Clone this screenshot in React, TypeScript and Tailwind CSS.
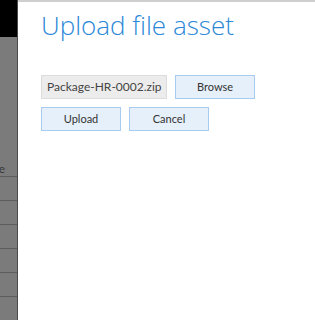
const rows = [0, 1, 2, 3, 4, 5];

export default function App() {
  return (
    <div className="flex h-[320px] w-[315px] overflow-hidden bg-white" style={{ fontFamily: 'Lato, "Liberation Sans", sans-serif' }}>
      <div className="flex w-[18px] shrink-0 flex-col bg-[#7b7b7b] border-r border-[#4a4a4a]">
        <div className="h-[38px] bg-black" />
        <div className="relative h-[143px]">
          <span className="absolute right-[12px] top-[126px] text-[12px] leading-none text-[#3a3a3a]">e</span>
        </div>
        {rows.map((r) => (
          <div key={r} className="h-[24px] shrink-0 border-t border-[#5c5c5c]" />
        ))}
      </div>
      <div className="flex flex-1 flex-col border-t-[2px] border-[#cfcfcf] pl-[23px] pt-[7px]">
        <h1 className="font-['Open_Sans'] text-[26px] font-light leading-[32px] text-[#2b88d8]">Upload file asset</h1>
        <div className="mt-[34px] flex gap-[8px]">
          <div className="flex h-[24px] w-[126px] shrink-0 items-center overflow-hidden whitespace-nowrap border border-[#dcdcdc] bg-[#ececec] pl-[5px] text-[12px] text-[#444]">
            Package-HR-0002.zip
          </div>
          <button className="h-[24px] w-[80px] shrink-0 border border-[#a6cbef] bg-[#e6f0fa] text-[11px] text-[#333]">Browse</button>
        </div>
        <div className="mt-[8px] flex gap-[8px]">
          <button className="h-[24px] w-[80px] border border-[#a6cbef] bg-[#e6f0fa] text-[11px] text-[#333]">Upload</button>
          <button className="h-[24px] w-[80px] border border-[#a6cbef] bg-[#e6f0fa] text-[11px] text-[#333]">Cancel</button>
        </div>
      </div>
    </div>
  );
}
